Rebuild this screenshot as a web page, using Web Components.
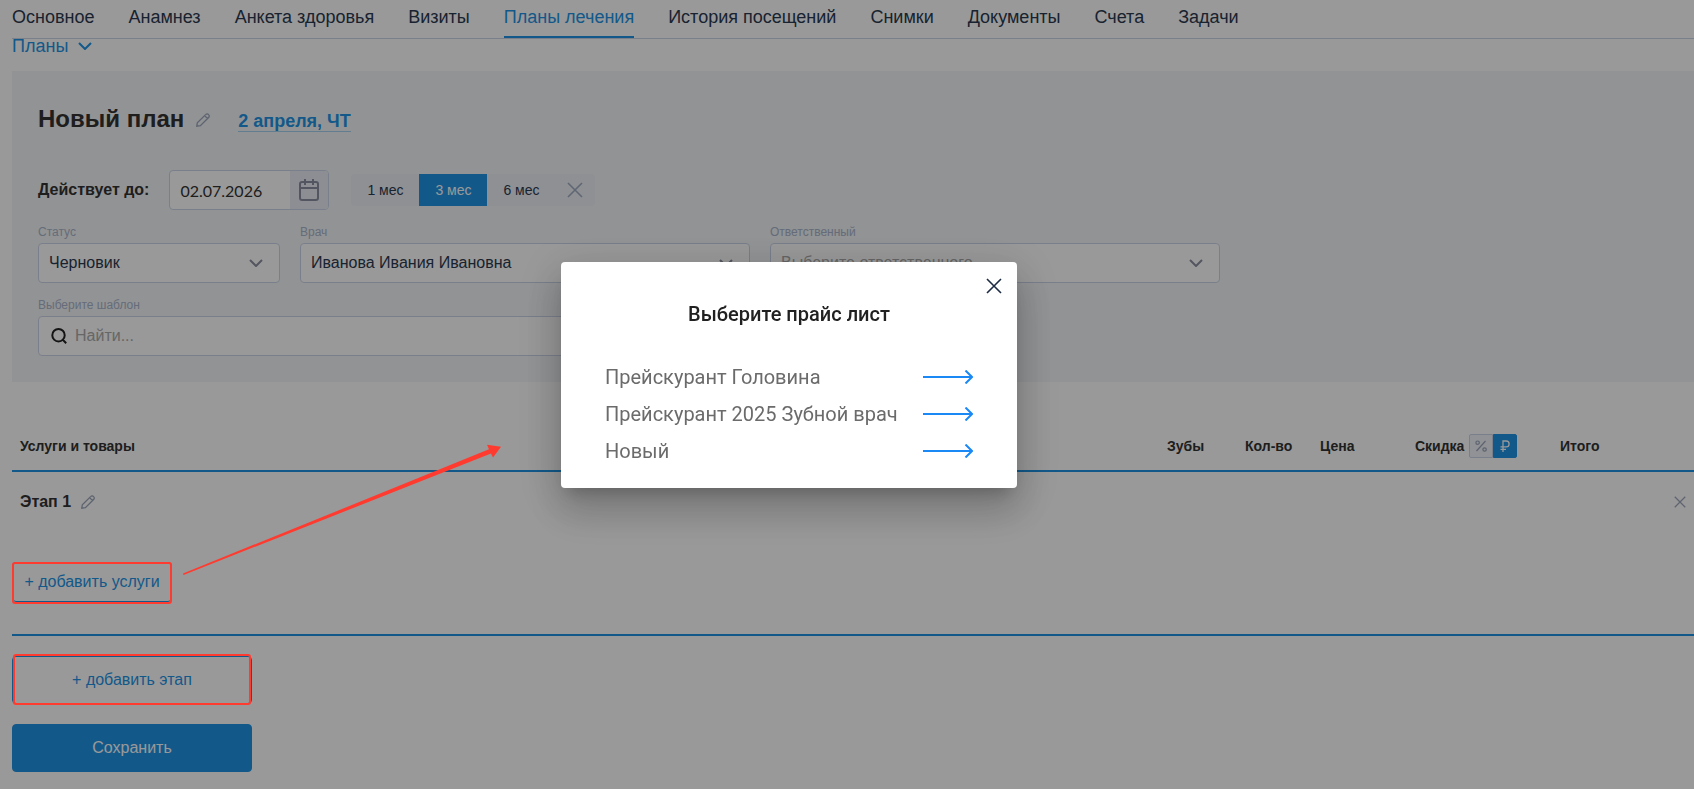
<!DOCTYPE html>
<html lang="ru">
<head>
<meta charset="UTF-8">
<meta name="viewport" content="width=device-width, initial-scale=1">
<title>Планы лечения</title>
<style>
    :root {
        --blue: #1e94e6;
        --text: #2b3a50;
        --heading: #333;
        --muted: #a9b4cb;
        --border: #cbd5e8;
        --panel: #f4f6f8;
    }
    body {
        margin: 0;
        min-height: 100vh;
        background: #fff;
        color: var(--heading);
        font: 16px/20px "Liberation Sans", Arial, sans-serif;
        overflow: hidden;
    }
</style>
</head>
<body>
<treatment-page></treatment-page>
<price-dialog heading="Выберите прайс лист">
    <price-option>Прейскурант Головина</price-option>
    <price-option>Прейскурант 2025 Зубной врач</price-option>
    <price-option>Новый</price-option>
</price-dialog>
<guide-marks></guide-marks>

<script>
const ICONS = {
    chevron: { w: 14, h: 8, d: 'M1 1l6 6 6-6', stroke: 2 },
    close: { w: 16, h: 16, d: 'M1 1l14 14M15 1L1 15', stroke: 1.6 },
    pencil: { w: 14, h: 14, d: 'M.8 13.2l.5-3.4 8.3-8.2c.9-1 2.2-1 3 0 .8.8.8 2 0 2.9L4.400 12.700zM8.600 2.600l2.900 2.900', stroke: 1.3 },
    calendar: { w: 20, h: 22, d: 'M3 3h14a2 2 0 0 1 2 2v14a2 2 0 0 1-2 2H3a2 2 0 0 1-2-2V5a2 2 0 0 1 2-2zM1 9h18M6 0v6M14 0v6', stroke: 2 },
    search: { w: 16, h: 16, d: 'M7.500 1a6.200 6.200 0 1 1 0 12.400a6.200 6.200 0 0 1 0-12.400zM11.800 11.800l3.400 3.400', stroke: 2 },
    arrow: { w: 50, h: 14, d: 'M0 7h49M42.500 .5L49 7l-6.500 6.500', stroke: 2 },
    percent: { w: 12, h: 12, d: 'M10.500 1L1.500 11M2.600 1a1.700 1.700 0 1 1 0 3.400a1.700 1.700 0 0 1 0-3.400zM9.600 7.800a1.700 1.700 0 1 1 0 3.400a1.700 1.700 0 0 1 0-3.400z', stroke: 1.2 },
    ruble: { w: 10, h: 12, d: 'M3 12V1h3.200a2.800 2.800 0 0 1 0 5.800H.5M.5 9.300h5.500', stroke: 1.3 }
};

class UiIcon extends HTMLElement {
    constructor() {
        super();
        this.attachShadow({ mode: 'open' });
    }

    connectedCallback() {
        const icon = ICONS[this.getAttribute('name')];
        const width = this.getAttribute('width') || icon.w;
        this.shadowRoot.innerHTML = `
            <style>
                :host { display: inline-flex; flex: none; }
                svg { display: block; fill: none; stroke: currentColor; }
            </style>
            <svg width="${width}" height="${Math.round(width * icon.h / icon.w)}" viewBox="0 0 ${icon.w} ${icon.h}"
                 stroke-width="${icon.stroke}" aria-hidden="true"><path d="${icon.d}"/></svg>
        `;
    }
}
customElements.define('ui-icon', UiIcon);

class TabBar extends HTMLElement {
    constructor() {
        super();
        this.attachShadow({ mode: 'open' });
    }

    connectedCallback() {
        const tabs = ['Основное', 'Анамнез', 'Анкета здоровья', 'Визиты', 'Планы лечения',
            'История посещений', 'Снимки', 'Документы', 'Счета', 'Задачи'];
        this.shadowRoot.innerHTML = `
            <style>
                :host { display: block; border-bottom: 1px solid var(--border); }
                nav { display: flex; gap: 34px; }
                a {
                    padding-bottom: 2px;
                    border-bottom: 2px solid transparent;
                    color: var(--text);
                    font-size: 18px;
                    line-height: 34px;
                    text-decoration: none;
                    white-space: nowrap;
                }
                a.active { color: var(--blue); border-color: var(--blue); }
            </style>
            <nav>
                ${tabs.map(t => `<a href="#"${t === 'Планы лечения' ? ' class="active" aria-current="page"' : ''}>${t}</a>`).join('')}
            </nav>
        `;
    }
}
customElements.define('tab-bar', TabBar);

class SelectField extends HTMLElement {
    constructor() {
        super();
        this.attachShadow({ mode: 'open' });
    }

    connectedCallback() {
        const value = this.getAttribute('value');
        const placeholder = this.getAttribute('placeholder');
        this.shadowRoot.innerHTML = `
            <style>
                :host { display: block; min-width: 0; }
                label { display: block; margin-bottom: 4px; color: var(--muted); font-size: 12px; line-height: 14px; }
                .box { display: grid; align-items: center; }
                .box > * { grid-area: 1 / 1; }
                select {
                    appearance: none;
                    box-sizing: border-box;
                    width: 100%;
                    height: 40px;
                    padding: 0 40px 0 10px;
                    border: 1px solid var(--border);
                    border-radius: 4px;
                    background: #fff;
                    color: var(--text);
                    font: inherit;
                }
                select.empty { color: #aaa; }
                ui-icon { justify-self: end; margin-right: 17px; color: #8b90a0; pointer-events: none; }
            </style>
            <label for="field">${this.getAttribute('label')}</label>
            <div class="box">
                <select id="field"${value ? '' : ' class="empty"'}><option>${value || placeholder}</option></select>
                <ui-icon name="chevron"></ui-icon>
            </div>
        `;
    }
}
customElements.define('select-field', SelectField);

class PlanForm extends HTMLElement {
    constructor() {
        super();
        this.attachShadow({ mode: 'open' });
    }

    connectedCallback() {
        this.shadowRoot.innerHTML = `
            <style>
                :host { display: block; padding: 34px 26px 26px; background: var(--panel); }
                button { border: 0; padding: 0; background: none; color: inherit; font: inherit; cursor: pointer; }
                .title { display: flex; align-items: baseline; margin-bottom: 37px; }
                h1 { margin: 0; font-size: 24px; line-height: 28px; }
                .edit { margin: 0 28px 0 12px; color: #9ba5ba; }
                .date { border-bottom: 1px solid #a5d0f0; color: var(--blue); font-size: 18px; font-weight: bold; line-height: 20px; text-decoration: none; }
                .valid { display: flex; align-items: center; margin-bottom: 15px; }
                .valid > label { font-weight: bold; margin-right: 20px; }
                .picker { display: flex; box-sizing: border-box; width: 160px; height: 40px; margin-right: 22px; border: 1px solid var(--border); border-radius: 4px; background: #fff; overflow: hidden; }
                .picker input { flex: 1; min-width: 0; padding: 0 10px; border: 0; background: none; color: var(--heading); font: 16px Lato, sans-serif; }
                .picker button { display: flex; align-items: center; justify-content: center; width: 38px; background: #eaedf5; color: #8b90a0; }
                .terms { display: flex; height: 32px; border-radius: 4px; background: #eef0f5; overflow: hidden; }
                .terms button { width: 68px; color: var(--text); font-size: 14px; }
                .terms button.on { background: var(--blue); color: #fff; }
                .terms button.clear { display: flex; align-items: center; justify-content: center; width: 40px; color: #a0acc2; }
                .fields { display: grid; grid-template-columns: 242px 450px 450px; gap: 15px 20px; }
                .template { grid-column: span 2; }
                .template label { display: block; margin-bottom: 4px; color: var(--muted); font-size: 12px; line-height: 14px; }
                .search { display: flex; align-items: center; gap: 8px; box-sizing: border-box; height: 40px; padding: 0 12px; border: 1px solid var(--border); border-radius: 4px; background: #fff; }
                .search input { flex: 1; padding: 0; border: 0; background: none; font: inherit; }
                .search input::placeholder { color: #aaa; }
                .search ui-icon { color: #222; }
            </style>
            <div class="title">
                <h1>Новый план</h1>
                <button class="edit" aria-label="Переименовать"><ui-icon name="pencil"></ui-icon></button>
                <a class="date" href="#">2 апреля, ЧТ</a>
            </div>
            <div class="valid">
                <label for="until">Действует до:</label>
                <div class="picker">
                    <input id="until" value="02.07.2026">
                    <button aria-label="Календарь"><ui-icon name="calendar"></ui-icon></button>
                </div>
                <div class="terms">
                    <button>1 мес</button>
                    <button class="on">3 мес</button>
                    <button>6 мес</button>
                    <button class="clear" aria-label="Сбросить"><ui-icon name="close"></ui-icon></button>
                </div>
            </div>
            <div class="fields">
                <select-field label="Статус" value="Черновик"></select-field>
                <select-field label="Врач" value="Иванова Ивания Ивановна"></select-field>
                <select-field label="Ответственный" placeholder="Выберите ответственного"></select-field>
                <div class="template">
                    <label for="template">Выберите шаблон</label>
                    <div class="search">
                        <ui-icon name="search"></ui-icon>
                        <input id="template" placeholder="Найти...">
                    </div>
                </div>
            </div>
        `;
    }
}
customElements.define('plan-form', PlanForm);

class ServiceTable extends HTMLElement {
    constructor() {
        super();
        this.attachShadow({ mode: 'open' });
    }

    connectedCallback() {
        this.shadowRoot.innerHTML = `
            <style>
                :host { display: block; }
                table { width: 100%; border-collapse: separate; border-spacing: 0; table-layout: fixed; }
                th { height: 48px; padding: 0 8px; border-bottom: 2px solid var(--blue); font-size: 14px; text-align: left; white-space: nowrap; }
                td { padding: 0 8px; vertical-align: top; border-bottom: 2px solid var(--blue); }
                td.main { padding: 20px 0 32px; }
                td.remove { padding-top: 24px; text-align: right; }
                button { padding: 0; border: 0; background: none; font: inherit; cursor: pointer; }
                .discount { display: flex; align-items: center; gap: 5px; }
                .units { display: flex; }
                .units button { display: flex; align-items: center; justify-content: center; box-sizing: border-box; width: 24px; height: 24px; border: 1px solid var(--border); border-radius: 2px 0 0 2px; background: #f1f3f8; color: #9ba5ba; }
                .units button.on { border-color: var(--blue); border-radius: 0 2px 2px 0; background: var(--blue); color: #fff; }
                .stage { display: flex; align-items: center; gap: 10px; margin-bottom: 50px; padding-left: 8px; }
                h2 { margin: 0; color: var(--heading); font-size: 16px; line-height: 20px; }
                .stage button, td.remove button { display: inline-flex; color: #9ba5ba; vertical-align: top; }
                .add { box-sizing: border-box; width: 160px; height: 40px; border: 1px solid var(--blue); border-radius: 4px; color: var(--blue); }
            </style>
            <table>
                <colgroup>
                    <col><col width="78"><col width="75"><col width="95"><col width="145"><col width="142">
                </colgroup>
                <thead>
                    <tr>
                        <th>Услуги и товары</th><th>Зубы</th><th>Кол-во</th><th>Цена</th>
                        <th>
                            <div class="discount">Скидка
                                <div class="units">
                                    <button aria-label="Проценты"><ui-icon name="percent"></ui-icon></button>
                                    <button class="on" aria-label="Рубли"><ui-icon name="ruble"></ui-icon></button>
                                </div>
                            </div>
                        </th>
                        <th>Итого</th>
                    </tr>
                </thead>
                <tbody>
                    <tr>
                        <td class="main" colspan="5">
                            <div class="stage"><h2>Этап 1</h2><button aria-label="Переименовать этап"><ui-icon name="pencil"></ui-icon></button></div>
                            <button class="add">+ добавить услуги</button>
                        </td>
                        <td class="remove"><button aria-label="Удалить этап"><ui-icon name="close" width="12"></ui-icon></button></td>
                    </tr>
                </tbody>
            </table>
        `;
    }
}
customElements.define('service-table', ServiceTable);

class TreatmentPage extends HTMLElement {
    constructor() {
        super();
        this.attachShadow({ mode: 'open' });
    }

    connectedCallback() {
        this.shadowRoot.innerHTML = `
            <style>
                :host { display: block; padding-left: 12px; }
                .plans { display: flex; align-items: center; gap: 10px; margin-bottom: 18px; padding: 0; border: 0; background: none; color: var(--blue); font: inherit; font-size: 18px; line-height: 14px; }
                service-table { margin: 40px 0 20px; }
                .actions { display: flex; flex-direction: column; gap: 20px; width: 240px; }
                .actions button { box-sizing: border-box; height: 48px; border: 1px solid var(--blue); border-radius: 4px; background: none; color: var(--blue); font: inherit; }
                .actions button.save { background: var(--blue); color: #fff; }
            </style>
            <tab-bar></tab-bar>
            <button class="plans">Планы <ui-icon name="chevron"></ui-icon></button>
            <plan-form></plan-form>
            <service-table></service-table>
            <div class="actions">
                <button>+ добавить этап</button>
                <button class="save">Сохранить</button>
            </div>
        `;
    }
}
customElements.define('treatment-page', TreatmentPage);

class PriceOption extends HTMLElement {
    constructor() {
        super();
        this.attachShadow({ mode: 'open' });
    }

    connectedCallback() {
        this.shadowRoot.innerHTML = `
            <style>
                :host { display: block; }
                button {
                    display: flex;
                    align-items: center;
                    justify-content: space-between;
                    width: 100%;
                    height: 37px;
                    padding: 0;
                    border: 0;
                    background: none;
                    color: #6b6b6b;
                    font: inherit;
                    cursor: pointer;
                }
                ui-icon { color: #1a88f5; }
            </style>
            <button><span><slot></slot></span><ui-icon name="arrow"></ui-icon></button>
        `;
    }
}
customElements.define('price-option', PriceOption);

class PriceDialog extends HTMLElement {
    constructor() {
        super();
        this.attachShadow({ mode: 'open' });
    }

    connectedCallback() {
        this.shadowRoot.innerHTML = `
            <style>
                :host {
                    position: fixed;
                    inset: 0;
                    display: flex;
                    align-items: center;
                    justify-content: center;
                    box-sizing: border-box;
                    padding: 0 116px 39px 0;
                    background: rgba(0, 0, 0, .4);
                    font-family: Roboto, sans-serif;
                    font-size: 20px;
                }
                section {
                    position: relative;
                    box-sizing: border-box;
                    width: 456px;
                    padding: 36px 44px 19px;
                    border-radius: 4px;
                    background: #fff;
                    box-shadow: 0 11px 15px -7px rgba(0, 0, 0, .2), 0 24px 38px 3px rgba(0, 0, 0, .14), 0 9px 46px 8px rgba(0, 0, 0, .12);
                }
                h2 { margin: 0 0 28px; color: #212121; font-size: 20px; font-weight: 500; line-height: 32px; text-align: center; }
                .close { position: absolute; top: 16px; right: 15px; padding: 0; border: 0; background: none; color: #1d2b44; line-height: 0; }
            </style>
            <section role="dialog" aria-labelledby="heading">
                <button class="close" aria-label="Закрыть"><ui-icon name="close"></ui-icon></button>
                <h2 id="heading">${this.getAttribute('heading')}</h2>
                <slot></slot>
            </section>
        `;
    }
}
customElements.define('price-dialog', PriceDialog);

// Red hint frames and the arrow, drawn over everything
class GuideMarks extends HTMLElement {
    constructor() {
        super();
        this.attachShadow({ mode: 'open' });
    }

    connectedCallback() {
        this.shadowRoot.innerHTML = `
            <style>
                :host { position: absolute; top: 0; left: 0; pointer-events: none; }
                svg { display: block; }
                rect { fill: none; stroke: #ff3b30; stroke-width: 2; }
                path { fill: #ff3b30; }
            </style>
            <svg width="520" height="720" aria-hidden="true">
                <rect x="13" y="563" width="158" height="40" rx="2"/>
                <rect x="14" y="655" width="236" height="49" rx="2"/>
                <path d="M183 573.500L489 449.300 487 444.700 501 446.700 493 457.500 491 453.500 183.500 575z"/>
            </svg>
        `;
    }
}
customElements.define('guide-marks', GuideMarks);
</script>
</body>
</html>
